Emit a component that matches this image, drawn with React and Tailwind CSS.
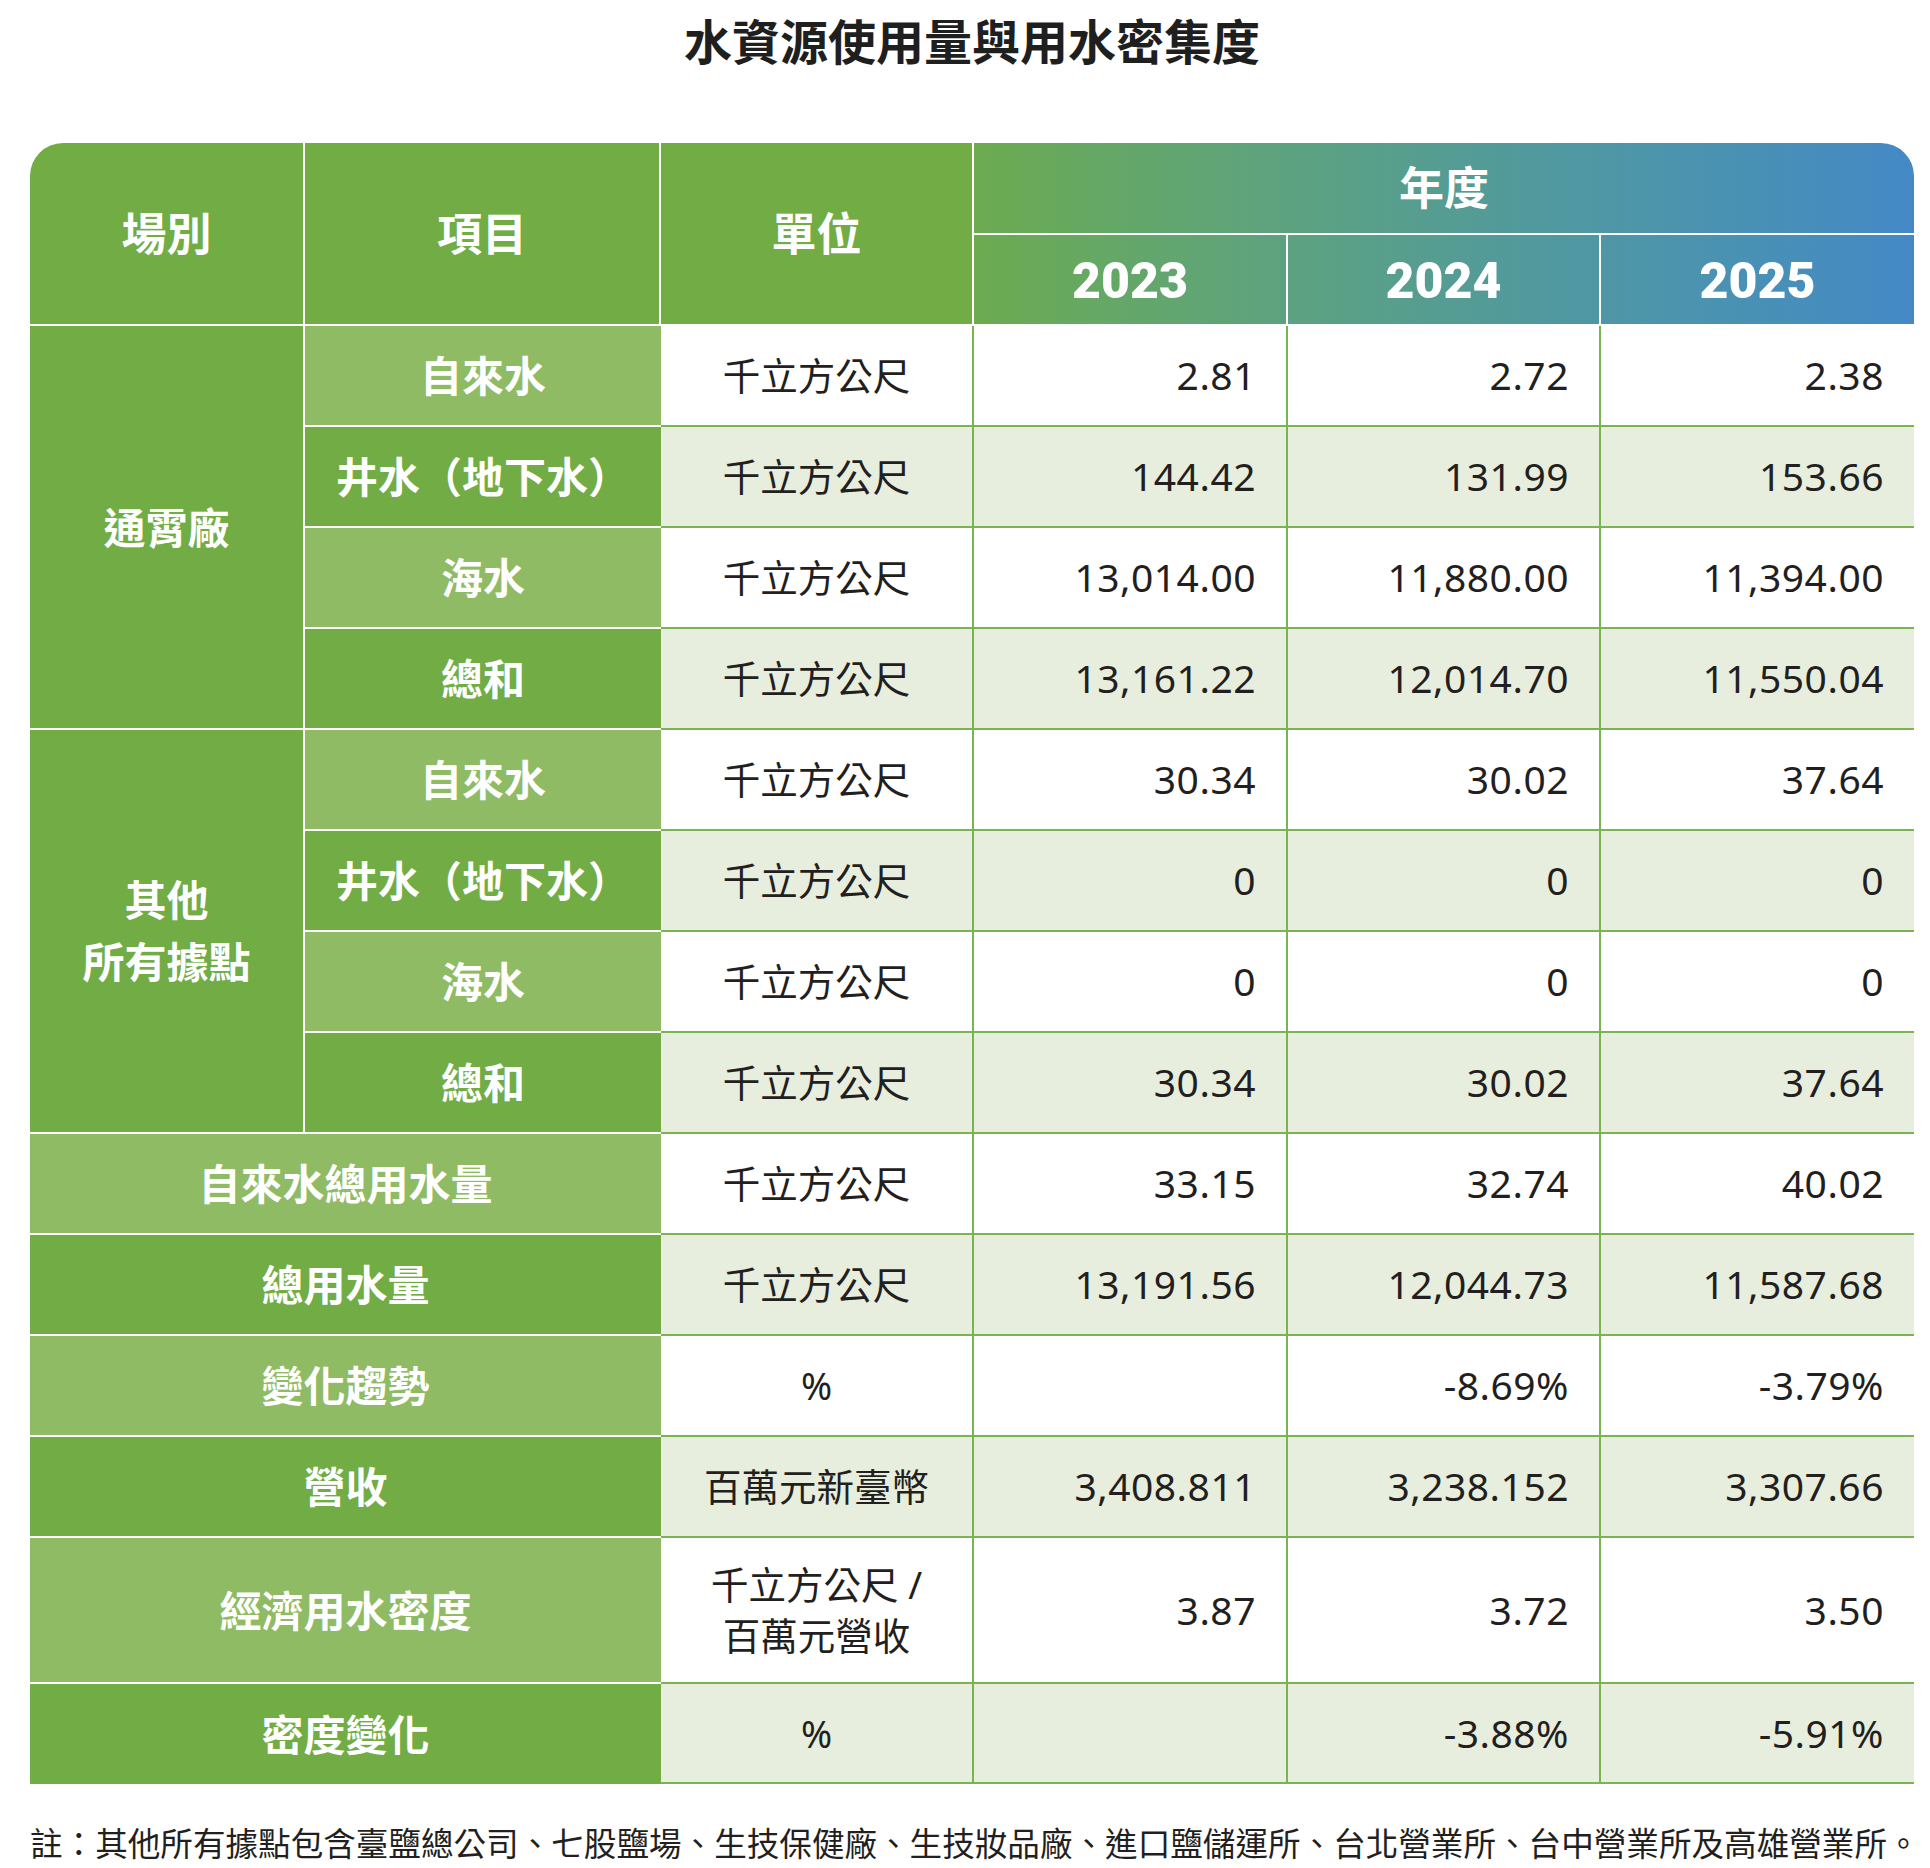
import React from "react";

const CJK = { fontFamily: '"Noto Sans", "Noto Sans CJK TC", sans-serif' };

const rows = [
  { item: "自來水", light: true, unit: "千立方公尺", v: ["2.81", "2.72", "2.38"] },
  { item: "井水（地下水）", light: false, unit: "千立方公尺", v: ["144.42", "131.99", "153.66"] },
  { item: "海水", light: true, unit: "千立方公尺", v: ["13,014.00", "11,880.00", "11,394.00"] },
  { item: "總和", light: false, unit: "千立方公尺", v: ["13,161.22", "12,014.70", "11,550.04"] },
  { item: "自來水", light: true, unit: "千立方公尺", v: ["30.34", "30.02", "37.64"] },
  { item: "井水（地下水）", light: false, unit: "千立方公尺", v: ["0", "0", "0"] },
  { item: "海水", light: true, unit: "千立方公尺", v: ["0", "0", "0"] },
  { item: "總和", light: false, unit: "千立方公尺", v: ["30.34", "30.02", "37.64"] },
];

const summary = [
  { item: "自來水總用水量", light: true, unit: "千立方公尺", v: ["33.15", "32.74", "40.02"] },
  { item: "總用水量", light: false, unit: "千立方公尺", v: ["13,191.56", "12,044.73", "11,587.68"] },
  { item: "變化趨勢", light: true, unit: "%", v: ["", "-8.69%", "-3.79%"] },
  { item: "營收", light: false, unit: "百萬元新臺幣", v: ["3,408.811", "3,238.152", "3,307.66"] },
  { item: "經濟用水密度", light: true, unit: "千立方公尺 /\n百萬元營收", v: ["3.87", "3.72", "3.50"] },
  { item: "密度變化", light: false, unit: "%", v: ["", "-3.88%", "-5.91%"], last: true },
];

function DataCells({ r }) {
  const bg = r.light ? "bg-white" : "bg-[#e7eedd]";
  return (
    <>
      <div
        className={`${bg} border-r-2 border-b-2 border-[#78b450] flex items-center justify-center text-center text-[37.5px] leading-[51px] text-[#231f20] whitespace-pre-line`}
      >
        {r.unit}
      </div>
      {r.v.map((val, i) => (
        <div
          key={i}
          className={`${bg} border-b-2 border-[#78b450] ${i < 2 ? "border-r-2" : ""} flex items-center justify-end pr-[30px] text-[39px] tracking-[0.5px] text-[#231f20]`}
          style={{ fontFamily: '"Noto Sans", sans-serif' }}
        >
          {val}
        </div>
      ))}
    </>
  );
}

export default function App() {
  return (
    <div className="bg-white w-[1930px] h-[1868px] pl-[30px]" style={CJK}>
      <div
        className="w-[1884px] pt-[11px] text-center text-[48px] leading-[56px] font-bold text-[#1f1f1f]"
        style={{ fontFamily: '"Noto Sans CJK TC", sans-serif' }}
      >
        水資源使用量與用水密集度
      </div>

      <div className="mt-[76px] w-[1884px]">
        {/* Header */}
        <div className="grid grid-cols-[275px_356px_313px_940px] h-[181px] text-white font-bold">
          <div className="bg-[#72ac45] rounded-tl-[33px] border-r-2 border-white flex items-center justify-center text-[45px]">
            場別
          </div>
          <div className="bg-[#72ac45] border-r-2 border-white flex items-center justify-center text-[45px]">
            項目
          </div>
          <div className="bg-[#72ac45] border-r-2 border-white flex items-center justify-center text-[45px]">
            單位
          </div>
          <div className="bg-linear-to-r from-[#6cab4f] to-[#4489c6] rounded-tr-[33px] flex flex-col">
            <div className="h-[92px] border-b-2 border-white flex items-center justify-center text-[45px]">
              年度
            </div>
            <div
              className="flex-1 grid grid-cols-[314px_313px_313px] text-[50px] font-black"
              style={{ fontFamily: 'Roboto, "Noto Sans", sans-serif' }}
            >
              <div className="border-r-2 border-white flex items-center justify-center pt-[4px]">2023</div>
              <div className="border-r-2 border-white flex items-center justify-center pt-[4px]">2024</div>
              <div className="flex items-center justify-center pt-[4px]">2025</div>
            </div>
          </div>
        </div>

        {/* Body */}
        <div className="mt-[2px] grid grid-cols-[275px_356px_313px_314px_313px_313px] grid-rows-[repeat(12,101px)_146px_100px]">
          {rows.map((r, idx) => (
            <React.Fragment key={idx}>
              {idx === 0 && (
                <div className="row-span-4 bg-[#72ac45] border-r-2 border-b-2 border-white flex items-center justify-center text-white font-bold text-[42px]">
                  通霄廠
                </div>
              )}
              {idx === 4 && (
                <div className="row-span-4 bg-[#72ac45] border-r-2 border-b-2 border-white flex flex-col items-center justify-center text-white font-bold text-[42px] leading-[62px] text-center">
                  <span>其他</span>
                  <span>所有據點</span>
                </div>
              )}
              <div
                className={`${r.light ? "bg-[#8fbb65]" : "bg-[#72ac45]"} border-b-2 border-white flex items-center justify-center text-white font-bold text-[42px]`}
              >
                {r.item}
              </div>
              <DataCells r={r} />
            </React.Fragment>
          ))}
          {summary.map((r, idx) => (
            <React.Fragment key={"s" + idx}>
              <div
                className={`col-span-2 ${r.light ? "bg-[#8fbb65]" : "bg-[#72ac45]"} ${r.last ? "" : "border-b-2 border-white"} flex items-center justify-center text-white font-bold text-[42px]`}
              >
                {r.item}
              </div>
              <DataCells r={r} />
            </React.Fragment>
          ))}
        </div>
      </div>

      <div
        className="mt-[38px] w-[1884px] whitespace-nowrap text-[32.6px] leading-[40px] text-[#231f20]"
        style={{ fontFamily: '"Noto Sans CJK TC", sans-serif' }}
      >
        註：其他所有據點包含臺鹽總公司、七股鹽場、生技保健廠、生技妝品廠、進口鹽儲運所、台北營業所、台中營業所及高雄營業所。
      </div>
    </div>
  );
}
